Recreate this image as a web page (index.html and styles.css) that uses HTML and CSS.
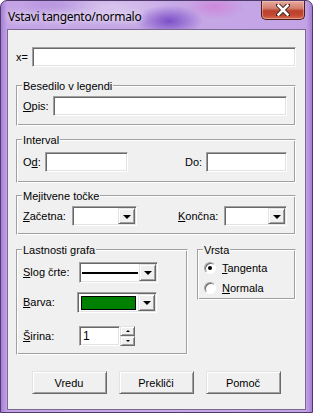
FILE: index.html
```html
<!doctype html>
<html>
<head>
  <link rel="stylesheet" href="styles.css">
</head>
<body>
  <div class="window">
    <div class="titlebar">
      <span class="title">Vstavi tangento/normalo</span>
      <span class="close">
        <svg width="14" height="12" viewBox="0 0 14 12">
          <path d="M2 1 L12 11 M12 1 L2 11" stroke="#3a1a14" stroke-width="4.4" stroke-linecap="square"/>
          <path d="M2.5 1.5 L11.5 10.5 M11.5 1.5 L2.5 10.5" stroke="#fff" stroke-width="2.6" stroke-linecap="square"/>
        </svg>
      </span>
    </div>

    <div class="client">
      <div class="row">
        <span class="lbl lbl-x">x=</span>
        <span class="edit w-x"></span>
      </div>

      <div class="group g1">
        <span class="caption">Besedilo v legendi</span>
        <div class="row first">
          <span class="lbl lbl-opis"><u>O</u>pis:</span>
          <span class="edit w-opis"></span>
        </div>
      </div>

      <div class="group g2">
        <span class="caption">Interval</span>
        <div class="row first">
          <span class="lbl lbl-od">O<u>d</u>:</span>
          <span class="edit w-od"></span>
          <span class="lbl lbl-do push">Do:</span>
          <span class="edit w-do"></span>
        </div>
      </div>

      <div class="group g3">
        <span class="caption">Mejitvene točke</span>
        <div class="row first">
          <span class="lbl lbl-zac"><u>Z</u>ačetna:</span>
          <span class="combo w-zac"><span class="val"></span><span class="drop"><i class="arrow"></i></span></span>
          <span class="lbl lbl-kon push"><u>K</u>ončna:</span>
          <span class="combo w-kon"><span class="val"></span><span class="drop"><i class="arrow"></i></span></span>
        </div>
      </div>

      <div class="pair">
        <div class="group g4">
          <span class="caption">Lastnosti grafa</span>
          <div class="row first">
            <span class="lbl lbl-slog"><u>S</u>log črte:</span>
            <span class="combo combo-tall w-slog"><span class="val"><i class="line"></i></span><span class="drop"><i class="arrow"></i></span></span>
          </div>
          <div class="row row-barva">
            <span class="lbl lbl-barva"><u>B</u>arva:</span>
            <span class="combo combo-tall w-barva"><span class="val"><i class="swatch"></i></span><span class="drop"><i class="arrow"></i></span></span>
          </div>
          <div class="row row-sirina">
            <span class="lbl lbl-slog"><u>Š</u>irina:</span>
            <span class="edit w-sirina"><span class="num">1</span></span>
            <span class="spin">
              <span class="spin-btn"><i class="tiny up"></i></span>
              <span class="spin-btn"><i class="tiny down"></i></span>
            </span>
          </div>
        </div>

        <div class="group g5">
          <span class="caption">Vrsta</span>
          <div class="radio first">
            <span class="dot on"></span><span><u>T</u>angenta</span>
          </div>
          <div class="radio">
            <span class="dot"></span><span><u>N</u>ormala</span>
          </div>
        </div>
      </div>

      <div class="buttons">
        <span class="btn">Vredu</span>
        <span class="btn">Prekliči</span>
        <span class="btn">Pomoč</span>
      </div>
    </div>
  </div>
</body>
</html>
```

FILE: styles.css
```css
body{
  margin: 0;
  font-family: "Liberation Sans", Arial, sans-serif;
  font-size: 11px;
  color: #000;
}
.window{
  width: 313px;
  height: 413px;
  box-sizing: border-box;
  border: 1px solid #4f3a6c;
  border-radius: 7px 7px 0 0;
  display: flex;
  flex-direction: column;
  background:
    radial-gradient(ellipse 34px 16px at 168px 20px, rgba(100,50,190,.75), rgba(100,50,190,0)),
    radial-gradient(ellipse 70px 18px at 110px 6px, rgba(255,255,255,.35), rgba(255,255,255,0)),
    radial-gradient(ellipse 30px 12px at 214px 6px, rgba(215,100,205,.45), rgba(215,100,205,0)),
    radial-gradient(ellipse 40px 12px at 60px 4px, rgba(150,110,210,.4), rgba(150,110,210,0)),
    linear-gradient(to right, #a67fd6, #c3a3e5 6px, #c6a8e6 50%, #c3a3e5 calc(100% - 6px), #a67fd6);
}
.titlebar{
  height: 28px;
  display: flex;
  justify-content: space-between;
  align-items: flex-start;
  padding-left: 7px;
}
.title{
  font-family: "Noto Sans", sans-serif;
  font-size: 12px;
  margin-top: 7px;
  letter-spacing: -0.3px;
  text-shadow: 0 0 6px rgba(255,255,255,.9), 0 0 10px rgba(255,255,255,.6);
}
.close{
  width: 44px;
  height: 19px;
  margin-right: 7px;
  box-sizing: border-box;
  border: 1px solid #4a1c1a;
  border-top: none;
  border-radius: 0 0 5px 5px;
  background: linear-gradient(#e6a99d, #d4806f 40%, #b9402c 55%, #c24a33 80%, #d46d52);
  box-shadow: inset 0 0 0 1px rgba(255,210,200,.45);
  display: flex;
  align-items: center;
  justify-content: center;
}
.client{
  flex: 1;
  margin: 0 6px 2px 6px;
  border: 1px solid #7b6791;
  background: #f0f0f0;
  padding: 17px 9px 0 8px;
}
.row{
  display: flex;
  align-items: center;
}
.lbl{
  line-height: 13px;
  white-space: nowrap;
}
.lbl-x{ width: 16px; }
.edit{
  display: block;
  box-sizing: border-box;
  height: 20px;
  background: #fff;
  border: 1px solid;
  border-color: #a0a0a0 #fff #fff #a0a0a0;
  box-shadow: inset 1px 1px #696969, inset -1px -1px #e3e3e3;
}
.w-x{ width: 264px; }

.group{
  border: 1px solid;
  border-color: #a0a0a0 #fff #fff #a0a0a0;
  box-shadow: inset 1px 1px #fff, inset -1px -1px #a0a0a0;
  padding: 0 8px 0 6px;
}
.caption{
  display: block;
  width: max-content;
  line-height: 13px;
  height: 13px;
  margin: -6px 0 -7px -1px;
  padding: 0 1px;
  background: #f0f0f0;
}
.push{ margin-left: auto; }

.g1{ margin-top: 18px; padding-bottom: 9px; }
.g1 .first{ margin-top: 10px; }
.lbl-opis{ width: 30px; }
.w-opis{ width: 234px; }

.g2{ margin-top: 13px; padding-bottom: 10px; }
.g2 .first{ margin-top: 12px; }
.lbl-od{ width: 22px; }
.w-od{ width: 83px; }
.lbl-do{ width: 21px; }
.w-do{ width: 81px; }

.g3{ margin-top: 12px; padding-bottom: 8px; }
.g3 .first{ margin-top: 10px; }
.lbl-zac{ width: 49px; }
.w-zac{ width: 65px; }
.lbl-kon{ width: 46px; }
.w-kon{ width: 63px; }

.combo{
  display: flex;
  box-sizing: border-box;
  height: 20px;
  padding: 1px;
  background: #fff;
  border: 1px solid;
  border-color: #a0a0a0 #fff #fff #a0a0a0;
  box-shadow: inset 1px 1px #696969, inset -1px -1px #e3e3e3;
}
.combo-tall{ height: 21px; }
.val{
  flex: 1;
  display: flex;
  align-items: center;
}
.drop{
  width: 17px;
  box-sizing: border-box;
  background: #f0f0f0;
  border: 1px solid;
  border-color: #e3e3e3 #696969 #696969 #e3e3e3;
  box-shadow: inset 1px 1px #fff, inset -1px -1px #a0a0a0;
  display: flex;
  align-items: center;
  justify-content: center;
}
.arrow{
  width: 0;
  height: 0;
  border-left: 4px solid transparent;
  border-right: 4px solid transparent;
  border-top: 4px solid #000;
  margin-top: 1px;
}

.pair{
  display: flex;
  align-items: flex-start;
  margin-top: 14px;
}
.g4{
  width: 172px;
  box-sizing: border-box;
  padding: 0 6px 8px 6px;
}
.g4 .first{ margin-top: 12px; }
.g5{
  width: 99px;
  box-sizing: border-box;
  margin-left: 9px;
  padding: 0 4px 3px 6px;
}
.lbl-slog{ width: 56px; }
.lbl-barva{ width: 54px; }
.w-slog{ width: 79px; }
.w-barva{ width: 80px; }
.row-barva{ margin-top: 9px; }
.row-sirina{ margin-top: 13px; }
.line{
  display: block;
  height: 2px;
  background: #000;
  margin: 0 1px 0 1px;
  flex: 1;
}
.swatch{
  display: block;
  flex: 1;
  height: 14px;
  box-sizing: border-box;
  margin: 0 2px;
  background: #008000;
  border: 1px solid #000;
}
.w-sirina{
  width: 41px;
  padding-left: 3px;
  line-height: 18px;
}
.num{ font-size: 12px; }
.spin{
  display: flex;
  flex-direction: column;
  height: 20px;
}
.spin-btn{
  width: 15px;
  height: 10px;
  box-sizing: border-box;
  background: #f0f0f0;
  border: 1px solid;
  border-color: #e3e3e3 #696969 #696969 #e3e3e3;
  box-shadow: inset 1px 1px #fff, inset -1px -1px #a0a0a0;
  display: flex;
  align-items: center;
  justify-content: center;
}
.tiny{
  width: 0;
  height: 0;
  border-left: 2px solid transparent;
  border-right: 2px solid transparent;
}
.tiny.up{ border-bottom: 2px solid #000; }
.tiny.down{ border-top: 2px solid #000; }

.radio{
  display: flex;
  align-items: center;
  height: 16px;
  line-height: 13px;
}
.radio.first{ margin-top: 10px; }
.radio + .radio{ margin-top: 4px; }
.dot{
  width: 12px;
  height: 12px;
  box-sizing: border-box;
  border-radius: 50%;
  margin-right: 6px;
  background: #fff;
  border: 1px solid;
  border-color: #a0a0a0 #fff #fff #a0a0a0;
  box-shadow: inset 1px 1px #696969;
  display: flex;
  align-items: center;
  justify-content: center;
}
.dot.on::after{
  content: "";
  width: 4px;
  height: 4px;
  border-radius: 50%;
  background: #000;
}

.buttons{
  display: flex;
  justify-content: center;
  gap: 12px;
  margin-top: 16px;
}
.btn{
  width: 75px;
  height: 23px;
  box-sizing: border-box;
  background: #f0f0f0;
  border: 1px solid;
  border-color: #e3e3e3 #696969 #696969 #e3e3e3;
  box-shadow: inset 1px 1px #fff, inset -1px -1px #a0a0a0;
  display: flex;
  align-items: center;
  justify-content: center;
}
```
